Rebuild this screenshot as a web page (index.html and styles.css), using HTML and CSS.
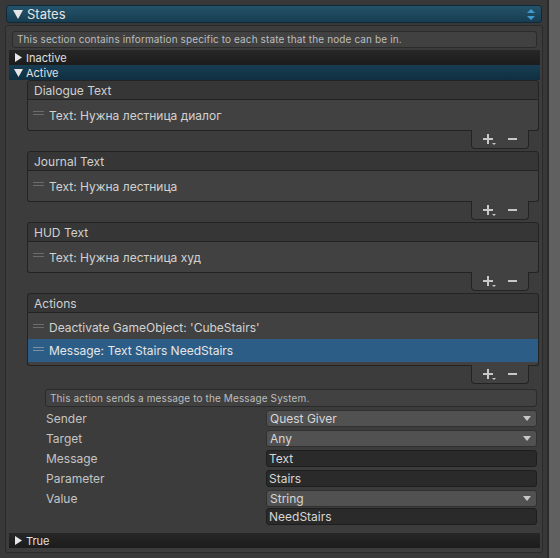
FILE: index.html
```html
<!DOCTYPE html>
<html lang="en">
<head>
<meta charset="UTF-8">
<meta name="viewport" content="width=device-width, initial-scale=1.0">
<title>Quest Node States</title>
<link rel="stylesheet" href="styles.css">
</head>
<body>

<div class="window">
    <div class="inspector">

        <div class="section-bar">
            <svg class="arrow-down" width="10" height="9" viewBox="0 0 10 9"><polygon points="0,0 10,0 5,9" fill="#e6e6e6"/></svg>
            <span class="section-title">States</span>
            <svg class="stepper" width="8" height="11" viewBox="0 0 8 11"><polygon points="4,0 8,4 0,4" fill="#3e9bd2"/><polygon points="0,7 8,7 4,11" fill="#3e9bd2"/></svg>
        </div>

        <div class="panel">
            <div class="help">This section contains information specific to each state that the node can be in.</div>

            <div class="fold fold-closed">
                <svg class="fold-icon" width="7" height="9" viewBox="0 0 7 9"><polygon points="0,0 7,4.5 0,9" fill="#e6e6e6"/></svg>
                Inactive
            </div>
            <div class="fold fold-open">
                <svg class="fold-icon" width="9" height="8" viewBox="0 0 9 8"><polygon points="0,0 9,0 4.5,8" fill="#e6e6e6"/></svg>
                Active
            </div>

            <!-- Dialogue Text -->
            <div class="rlist">
                <div class="rlist-header">Dialogue Text</div>
                <div class="rlist-body">
                    <div class="rlist-item">
                        <svg class="handle" width="11" height="5" viewBox="0 0 11 5"><rect x="0" y="0" width="11" height="1" fill="#6c6c6c"/><rect x="0" y="3" width="11" height="1" fill="#6c6c6c"/></svg>
                        Text: Нужна лестница диалог
                    </div>
                </div>
                <div class="rlist-footer">
                    <svg class="btn-plus" width="13" height="11" viewBox="0 0 13 11"><rect x="4" y="0" width="2" height="10" fill="#c8c8c8"/><rect x="0" y="4" width="10" height="2" fill="#c8c8c8"/><polygon points="9,9 13,9 11,11" fill="#c8c8c8"/></svg>
                    <svg class="btn-minus" width="9" height="2" viewBox="0 0 9 2"><rect x="0" y="0" width="9" height="2" fill="#c8c8c8"/></svg>
                </div>
            </div>

            <!-- Journal Text -->
            <div class="rlist">
                <div class="rlist-header">Journal Text</div>
                <div class="rlist-body">
                    <div class="rlist-item">
                        <svg class="handle" width="11" height="5" viewBox="0 0 11 5"><rect x="0" y="0" width="11" height="1" fill="#6c6c6c"/><rect x="0" y="3" width="11" height="1" fill="#6c6c6c"/></svg>
                        Text: Нужна лестница
                    </div>
                </div>
                <div class="rlist-footer">
                    <svg class="btn-plus" width="13" height="11" viewBox="0 0 13 11"><rect x="4" y="0" width="2" height="10" fill="#c8c8c8"/><rect x="0" y="4" width="10" height="2" fill="#c8c8c8"/><polygon points="9,9 13,9 11,11" fill="#c8c8c8"/></svg>
                    <svg class="btn-minus" width="9" height="2" viewBox="0 0 9 2"><rect x="0" y="0" width="9" height="2" fill="#c8c8c8"/></svg>
                </div>
            </div>

            <!-- HUD Text -->
            <div class="rlist">
                <div class="rlist-header">HUD Text</div>
                <div class="rlist-body">
                    <div class="rlist-item">
                        <svg class="handle" width="11" height="5" viewBox="0 0 11 5"><rect x="0" y="0" width="11" height="1" fill="#6c6c6c"/><rect x="0" y="3" width="11" height="1" fill="#6c6c6c"/></svg>
                        Text: Нужна лестница худ
                    </div>
                </div>
                <div class="rlist-footer">
                    <svg class="btn-plus" width="13" height="11" viewBox="0 0 13 11"><rect x="4" y="0" width="2" height="10" fill="#c8c8c8"/><rect x="0" y="4" width="10" height="2" fill="#c8c8c8"/><polygon points="9,9 13,9 11,11" fill="#c8c8c8"/></svg>
                    <svg class="btn-minus" width="9" height="2" viewBox="0 0 9 2"><rect x="0" y="0" width="9" height="2" fill="#c8c8c8"/></svg>
                </div>
            </div>

            <!-- Actions -->
            <div class="rlist">
                <div class="rlist-header">Actions</div>
                <div class="rlist-body rlist-body-actions">
                    <div class="rlist-item rlist-item-tall">
                        <svg class="handle" width="11" height="5" viewBox="0 0 11 5"><rect x="0" y="0" width="11" height="1" fill="#6c6c6c"/><rect x="0" y="3" width="11" height="1" fill="#6c6c6c"/></svg>
                        Deactivate GameObject: 'CubeStairs'
                    </div>
                    <div class="rlist-item rlist-item-tall selected">
                        <svg class="handle" width="11" height="5" viewBox="0 0 11 5"><rect x="0" y="0" width="11" height="1" fill="#7d8fa0"/><rect x="0" y="3" width="11" height="1" fill="#7d8fa0"/></svg>
                        Message: Text Stairs NeedStairs
                    </div>
                </div>
                <div class="rlist-footer">
                    <svg class="btn-plus" width="13" height="11" viewBox="0 0 13 11"><rect x="4" y="0" width="2" height="10" fill="#c8c8c8"/><rect x="0" y="4" width="10" height="2" fill="#c8c8c8"/><polygon points="9,9 13,9 11,11" fill="#c8c8c8"/></svg>
                    <svg class="btn-minus" width="9" height="2" viewBox="0 0 9 2"><rect x="0" y="0" width="9" height="2" fill="#c8c8c8"/></svg>
                </div>
            </div>

            <div class="help help-action">This action sends a message to the Message System.</div>

            <div class="props">
                <div class="prop">
                    <span class="prop-label">Sender</span>
                    <div class="popup">Quest Giver
                        <svg class="popup-arrow" width="8" height="5" viewBox="0 0 8 5"><polygon points="0,0 8,0 4,5" fill="#c8c8c8"/></svg>
                    </div>
                </div>
                <div class="prop">
                    <span class="prop-label">Target</span>
                    <div class="popup">Any
                        <svg class="popup-arrow" width="8" height="5" viewBox="0 0 8 5"><polygon points="0,0 8,0 4,5" fill="#c8c8c8"/></svg>
                    </div>
                </div>
                <div class="prop">
                    <span class="prop-label">Message</span>
                    <div class="textfield">Text</div>
                </div>
                <div class="prop">
                    <span class="prop-label">Parameter</span>
                    <div class="textfield">Stairs</div>
                </div>
                <div class="prop">
                    <span class="prop-label">Value</span>
                    <div class="popup">String
                        <svg class="popup-arrow" width="8" height="5" viewBox="0 0 8 5"><polygon points="0,0 8,0 4,5" fill="#c8c8c8"/></svg>
                    </div>
                </div>
                <div class="prop prop-tight">
                    <span class="prop-label"></span>
                    <div class="textfield">NeedStairs</div>
                </div>
            </div>

            <div class="fold fold-closed fold-true">
                <svg class="fold-icon" width="7" height="9" viewBox="0 0 7 9"><polygon points="0,0 7,4.5 0,9" fill="#e6e6e6"/></svg>
                True
            </div>
        </div>

    </div>
    <div class="scrollbar"></div>
</div>

</body>
</html>
```

FILE: styles.css
```css
body {
    margin: 0;
    padding: 0;
    background-color: #383838;
    font-family: Inter, "Noto Sans", sans-serif;
    color: #d2d2d2;
}

.window {
    display: flex;
    width: 560px;
    height: 558px;
    overflow: hidden;
}

.inspector {
    width: 547px;
    padding-top: 5px;
}

.scrollbar {
    flex: 1;
    border-left: 2px solid #2b2b2b;
    background-color: #606060;
}

/* Barra da seção "States" */
.section-bar {
    display: flex;
    align-items: center;
    box-sizing: border-box;
    height: 18px;
    width: 536px;
    margin-left: 6px;
    padding-left: 6px;
    padding-right: 6px;
    border: 1px solid #10293a;
    border-radius: 3px;
    background: linear-gradient(#245369, #183d51);
}

.section-title {
    margin-left: 4px;
    font-size: 13px;
    line-height: 15px;
    color: #e4e4e4;
    flex: 1;
}

.stepper {
    margin-top: 1px;
}

.panel {
    box-sizing: border-box;
    width: 538px;
    margin-left: 5px;
    margin-top: 2px;
    padding-bottom: 4px;
    border: 1px solid #2a2a2a;
    border-radius: 3px;
    background-color: #3c3c3c;
}

.help {
    box-sizing: border-box;
    height: 17px;
    line-height: 15px;
    margin: 5px 5px 2px 6px;
    padding-left: 4px;
    border: 1px solid #2b2b2b;
    border-radius: 3px;
    background-color: #414141;
    font-size: 10px;
    letter-spacing: 0.12px;
    color: #bdbdbd;
    white-space: nowrap;
    overflow: hidden;
}

.help-action {
    height: 18px;
    line-height: 16px;
    margin: 5px 5px 0 39px;
}

/* Linhas dobráveis (Inactive / Active / True) */
.fold {
    display: flex;
    align-items: center;
    height: 15px;
    margin: 0 2px 0 3px;
    font-size: 11px;
    color: #e0e0e0;
}

.fold-closed {
    background: linear-gradient(#272727, #1c1c1c);
}

.fold-open {
    background: linear-gradient(#173d52, #102f41);
}

.fold-icon {
    margin-left: 6px;
    margin-right: 4px;
}

.fold-open .fold-icon {
    margin-left: 5px;
    margin-right: 3px;
}

.fold-true {
    margin-top: 8px;
}

/* Listas reordenáveis */
.rlist {
    margin: 0 3px 2px 21px;
}

.rlist-header {
    box-sizing: border-box;
    height: 20px;
    line-height: 19px;
    padding-left: 6px;
    border: 1px solid #232323;
    border-radius: 3px 3px 0 0;
    background-color: #363636;
    font-size: 12px;
    color: #d0d0d0;
}

.rlist-body {
    box-sizing: border-box;
    height: 31px;
    padding-top: 4px;
    border: 1px solid #232323;
    border-top: none;
    border-radius: 0 0 3px 3px;
    background-color: #414141;
}

.rlist-body-actions {
    height: 53px;
    padding-top: 3px;
}

.rlist-item {
    display: flex;
    align-items: center;
    height: 22px;
    font-size: 12px;
    color: #d2d2d2;
}

.rlist-item-tall {
    height: 23px;
}

.rlist-item.selected {
    background-color: #2c5d87;
    color: #e6e6e6;
}

.handle {
    margin-left: 5px;
    margin-right: 5px;
    margin-top: -3px;
}

.rlist-footer {
    position: relative;
    box-sizing: border-box;
    display: flex;
    align-items: center;
    width: 58px;
    height: 19px;
    margin-top: -1px;
    margin-left: auto;
    margin-right: 10px;
    padding-left: 11px;
    padding-bottom: 1px;
    border: 1px solid #232323;
    border-top: none;
    border-radius: 0 0 4px 4px;
    background-color: #414141;
}

.btn-plus {
    margin-top: 2px;
}

.btn-minus {
    margin-left: 12px;
}

/* Campos da ação */
.props {
    margin: 0 5px 0 40px;
}

.prop {
    display: grid;
    grid-template-columns: 220px 1fr;
    height: 17px;
    margin-top: 3px;
}

.prop-tight {
    margin-top: 1px;
}

.prop-label {
    font-size: 12px;
    line-height: 17px;
    color: #c4c4c4;
}

.popup {
    position: relative;
    box-sizing: border-box;
    display: flex;
    align-items: center;
    padding-left: 3px;
    padding-right: 5px;
    border: 1px solid #303030;
    border-radius: 3px;
    background-color: #515151;
    font-size: 12px;
    color: #d6d6d6;
}

.popup-arrow {
    margin-left: auto;
}

.textfield {
    box-sizing: border-box;
    padding-left: 2px;
    line-height: 15px;
    border: 1px solid #1e1e1e;
    border-radius: 3px;
    background-color: #2a2a2a;
    font-size: 12px;
    color: #d6d6d6;
}
```
